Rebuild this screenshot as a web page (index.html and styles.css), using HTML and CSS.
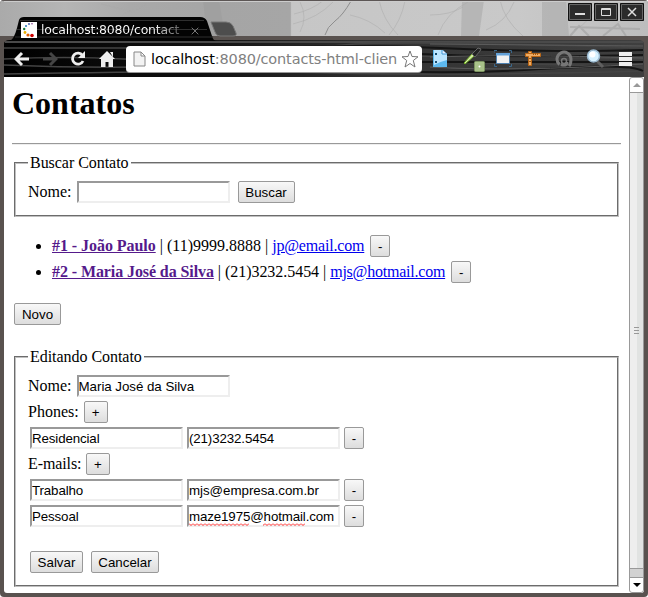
FILE: index.html
```html
<!DOCTYPE html>
<html lang="pt-BR">
<head>
<meta charset="utf-8">
<title>Contatos</title>
<link rel="stylesheet" href="styles.css">
</head>
<body>
<div class="window">
  <header class="chrome">
    <svg class="backdrop" width="648" height="77" viewBox="0 0 648 77" aria-hidden="true">
      <defs>
        <linearGradient id="sky"><stop offset="0" stop-color="#aaa"/><stop offset=".1" stop-color="#b5b5b5"/><stop offset=".2" stop-color="#a9a9a9"/><stop offset=".34" stop-color="#a5a5a5"/><stop offset=".448" stop-color="#a6a6a6"/><stop offset=".45" stop-color="#c6c6c6"/><stop offset=".8" stop-color="#c9c9c9"/><stop offset="1" stop-color="#bdbdbd"/></linearGradient>
        <linearGradient id="wood"><stop offset="0" stop-color="#000"/><stop offset=".3" stop-color="#111"/><stop offset=".6" stop-color="#333"/><stop offset="1" stop-color="#3f3f3f"/></linearGradient>
      </defs>
      <rect width="648" height="37" fill="url(#sky)"/>
      <path d="M462 0h22l-5 36h-18zM542 0h24l3 36h-27z" fill="#aaa" opacity=".6"/>
      <path d="M203 0h16l6 36h-18z" fill="#999" opacity=".4"/>
      <path d="M122 15C133 8 140 12 149 0M101 4l36 9M294 14q18-4 30-14M293 24q25-6 40-22M300 32q8-15 0-30M350 15q20 4 35 18M379 0q4 20 19 35M405 1q-4 20-16 34M430 15q20 0 33-8M438 35q8-22 30-33M486 30q20-8 28-28M500 0q4 20 23 36M574 30q18-8 24-30" fill="none" stroke="#aaa" opacity=".5"/>
      <path d="M351 1q-8 14-16 20t-10 14" fill="none" stroke="#8e8e8e"/>
      <path d="M570 36l9-10 10 10M570 27l70 2M603 36l15-12 8 12" fill="none" stroke="#999" stroke-width="2" opacity=".5"/>
      <path d="M0 .5h648" stroke="#5c5655"/><path d="M4 1.500h640" stroke="#ccc"/>
      <rect y="36" width="648" height="41" fill="#59524f"/>
      <path d="M4 44q0-4 6-4h628q6 0 6 4v33H4z" fill="url(#wood)"/>
      <path d="M5 42h638" stroke="#4a4a4a" stroke-width="2"/>
      <path d="M4 48h210q80 2 130-3t299 3M4 59q60-3 120 0t180-1 339 1M4 65q120 5 230-1t409 3M4 74q210-4 330-1t310-2" fill="none" stroke="#444" stroke-width="1.500"/>
      <path d="M220 51q110-8 220-3t203 2M360 62h283M360 70q90 5 180-1t103 2M420 54q90 4 223 1" fill="none" stroke="#151515" stroke-width="2"/>
      <path d="M430 57q80-3 213 1M430 67q80 5 213-3M430 44l213 2" fill="none" stroke="#5c5c5c"/>
      <path d="M10 41q4-2 7-13l2-8q1-3 5-3h176q5 0 7 4l5 15q1 5 5 5z" fill="#030303"/>
      <path d="M20 20.500h184M17 29.500h190M15 37h198" stroke="#2f2f2f"/>
      <path d="M211 22h15q5 0 7 4l3 7q1 3-3 3h-13q-4 0-5-4z" fill="#4d4d4d" stroke="#777"/>
    </svg>
    <div class="titlebar">
      <div class="tab">
        <svg class="favicon" width="16" height="16" viewBox="0 0 16 16"><path fill="#fff" d="M0 0h16v16H0z"/><circle cx="11" cy="13.500" r="1.800" fill="#c00"/><circle cx="7" cy="13" r="1.600" fill="#e05b00"/><circle cx="4" cy="10.500" r="1.400" fill="#eab000"/><circle cx="3.200" cy="7" r="1.200" fill="#187a40"/><circle cx="5" cy="4" r="1" fill="#277dc0"/><circle cx="8" cy="2" r=".9" fill="#3d59a8"/><circle cx="11" cy="1.700" r=".8" fill="#86408f"/></svg>
        <span class="tab-title">localhost:8080/contact</span>
        <svg class="tab-close" width="8" height="8" viewBox="0 0 8 8"><path d="M.7.7l6.600 6.600M7.300.7L.7 7.300" stroke="#777"/></svg>
      </div>
      <div class="window-buttons">
        <svg width="24" height="18" viewBox="0 0 24 18"><path d="M.5.5h23v17H.5z" fill="#2b2b2b" stroke="#111"/><path d="M1.500 1.500h21v15h-21z" fill="none" stroke="#666"/><path d="M7 11h10" stroke="#ddd" stroke-width="2"/></svg>
        <svg width="24" height="18" viewBox="0 0 24 18"><path d="M.5.5h23v17H.5z" fill="#2b2b2b" stroke="#111"/><path d="M1.500 1.500h21v15h-21z" fill="none" stroke="#666"/><path d="M7.500 5.500h9v7h-9zM7 6.500h10" fill="none" stroke="#ddd"/></svg>
        <svg width="24" height="18" viewBox="0 0 24 18"><path d="M.5.5h23v17H.5z" fill="#2b2b2b" stroke="#111"/><path d="M1.500 1.500h21v15h-21z" fill="none" stroke="#666"/><path d="M8 5l8 8M16 5l-8 8" stroke="#ddd" stroke-width="1.500"/></svg>
      </div>
    </div>
    <div class="toolbar">
      <svg class="nav" width="16" height="16" viewBox="0 0 16 16"><path d="M15 8H3M8 2L2 8l6 6" fill="none" stroke="#eee" stroke-width="3"/></svg>
      <svg class="nav" width="16" height="16" viewBox="0 0 16 16"><path d="M1 8h12M8 2l6 6-6 6" fill="none" stroke="#454545" stroke-width="3"/></svg>
      <svg class="nav" width="16" height="16" viewBox="0 0 16 16"><path d="M12.500 4.500A5.500 5.500 0 1 0 13 10" fill="none" stroke="#eee" stroke-width="2.800"/><path d="M15 0v7H8z" fill="#eee"/></svg>
      <svg class="nav" width="16" height="16" viewBox="0 0 16 16"><path d="M8 0l8 8h-2v8H9.500v-5h-3v5H2V8H0zM11 1h3v5z" fill="#eee"/></svg>
      <div class="address">
        <svg width="13" height="16" viewBox="0 0 13 16"><path d="M1 1h7l4 4v10H1zM8 1v4h4" fill="#f3f3f3" stroke="#888"/></svg>
        <span class="url">localhost<span class="path">:8080/contacts-html-clien</span></span>
        <svg class="star" width="18" height="18" viewBox="0 0 18 18"><path d="M9 1l2 5.500 6 .3-4.700 3.700L14 17l-5-3.500L4 17l1.700-6.500L1 6.800l6-.3z" fill="#fff" stroke="#777"/></svg>
      </div>
      <div class="extensions">
        <svg class="note" width="18" height="20" viewBox="0 0 18 20"><path d="M2 1h10l4 4v13H2z" fill="#5db9ef"/><path d="M3 1h8v4h5v6q-8 2-13 5z" fill="#bce5ff"/><path d="M11 1v4h5" fill="#eef" stroke="#3c98d4"/><path d="M4 4h2v2H4zM4 12h2v2H4z" fill="#174d70"/></svg>
        <svg class="picker" width="24" height="26" viewBox="0 0 24 26"><path d="M1 17l8-9 2 2-9 8z" fill="#d8eeaa" stroke="#73ad28"/><path d="M9 8l6-6 3 1-1 2-5 6z" fill="#222" stroke="#666"/><rect x="11.500" y="15.500" width="10" height="10" rx="1" fill="#a9c28a" stroke="#7c9461"/><circle cx="16.500" cy="20.500" r="1" fill="#fff"/></svg>
        <svg class="frame" width="18" height="18" viewBox="0 0 18 18"><path d="M0 3V.5h3M15 .5h2.500V3M.5 14v2.500H3M15 16.500h2.500V14" fill="none" stroke="#3a678a"/><path d="M2.500 3.500h13v10h-13z" fill="#f2f2f2" stroke="#4e81b0"/><path d="M2 3h14v2.500H2z" fill="#64a2d9"/></svg>
        <svg class="ruler" width="18" height="18" viewBox="0 0 18 18"><path d="M1.500 3.500h15v3h-9v9h-3v-9h-3zM4.500 1.500h3v2h-3z" fill="#efad65" stroke="#bb6716"/><path d="M9.500 3v2M11.500 3v2M13.500 3v2M5 8.500h2M5 11.500h2" stroke="#9e5712"/></svg>
        <svg class="loop" width="20" height="18" viewBox="0 0 20 18"><path d="M5.500 14.500A7 7 0 1 1 17 9q0 5-2 7M7 14.500q6 2 6-2.500" fill="none" stroke="#777" stroke-width="3"/><circle cx="10" cy="11" r="2.500" fill="none" stroke="#777" stroke-width="1.500"/></svg>
        <svg class="lens" width="20" height="20" viewBox="0 0 20 20"><path d="M12 12l6 6" stroke="#606060" stroke-width="3"/><circle cx="8.500" cy="7" r="6" fill="#d8f2ff" stroke="#9cbad0" stroke-width="1.500"/><circle cx="7.500" cy="5.500" r="3" fill="#fff"/></svg>
        <svg class="menu" width="13" height="16" viewBox="0 0 13 16"><path d="M0 1h13v4H0zM0 6h13v4H0zM0 11h13v4H0z" fill="#eee"/></svg>
      </div>
    </div>
  </header>

  <div class="viewport">
    <main>
      <h1>Contatos</h1>
      <hr>
      <fieldset class="search">
        <legend>Buscar Contato</legend>
        <div class="row"><span class="label">Nome:</span> <input type="text" aria-label="Nome"> <button class="w57">Buscar</button></div>
      </fieldset>
      <ul>
        <li><a class="visited" href="#c1">#1 - João Paulo</a> | (11)9999.8888 | <a href="#m1">jp@email.com</a> <button class="w20">-</button></li>
        <li class="tight"><a class="visited" href="#c2">#2 - Maria José da Silva</a> | (21)3232.5454 | <a href="#m2">mjs@hotmail.com</a> <button class="w20">-</button></li>
      </ul>
      <div class="row"><button class="w47">Novo</button></div>
      <fieldset class="edit">
        <legend>Editando Contato</legend>
        <div class="row"><span class="label">Nome:</span> <input class="name" type="text" value="Maria José da Silva" aria-label="Nome"></div>
        <div class="row"><span class="label">Phones:</span> <button class="w24">+</button></div>
        <div class="row items"><input type="text" value="Residencial"><input type="text" value="(21)3232.5454"><button class="w20">-</button></div>
        <div class="row"><span class="label wide">E-mails:</span> <button class="w24">+</button></div>
        <div class="row items"><input type="text" value="Trabalho"><input class="name" type="text" value="mjs@empresa.com.br"><button class="w20">-</button></div>
        <div class="row items"><input type="text" value="Pessoal"><span class="checked"><input type="text" value="maze1975@hotmail.com"><svg class="spelling" width="149" height="3" viewBox="0 0 149 3"><defs><pattern id="wave" width="4" height="3" patternUnits="userSpaceOnUse"><path d="M0 .5l2 2 2-2" fill="none" stroke="#f22"/></pattern></defs><path d="M0 0h60v3H0zM74 0h42v3H74z" fill="url(#wave)"/></svg></span><button class="w20">-</button></div>
        <div class="row actions"><button class="w53">Salvar</button> <button class="w68">Cancelar</button></div>
      </fieldset>
    </main>
    <aside class="scrollbar">
      <span class="arrow"><svg width="8" height="5" viewBox="0 0 8 5"><path d="M4 0l4 4H0z" fill="#999"/></svg></span>
      <span class="thumb"><i></i><i></i><i></i></span>
      <span class="track"></span>
      <span class="arrow"><svg width="8" height="5" viewBox="0 0 8 5"><path d="M0 0h8L4 4z" fill="#000"/></svg></span>
    </aside>
  </div>
</div>
</body>
</html>
```
FILE: styles.css
```css
* { box-sizing: border-box; }
body { margin: 0; background: #fff; font: 16px/18px "Liberation Serif", serif; color: #000; }
.window { width: 648px; height: 597px; display: grid; grid-template-rows: 77px 1fr; background: #59524f; border-radius: 4px; overflow: hidden; }
.chrome { position: relative; isolation: isolate; display: grid; grid-template-rows: 37px 40px; }
.backdrop { position: absolute; inset: 0; z-index: -1; }
svg { display: block; flex: none; }

.titlebar { display: flex; justify-content: space-between; padding: 3px 4px 0 21px; }
.tab { display: flex; align-items: center; height: 16px; margin-top: 19px; color: #fff; font: 12.5px/16px "DejaVu Sans", sans-serif; }
.tab-title { width: 144px; margin-left: 4px; white-space: nowrap; letter-spacing: -0.22px; background: linear-gradient(90deg, #fff 78%, #555 97%); background-clip: text; color: transparent; }
.tab-close { margin: 2px 0 0 6px; }
.window-buttons { display: flex; gap: 2px; }

.toolbar { display: flex; align-items: center; padding: 3px 15px 0 14px; }
.nav { margin-right: 12px; }
.nav:nth-child(3) { margin-right: 13px; }
.nav:nth-child(4) { margin-right: 11px; }
.address { display: flex; align-items: center; width: 296px; height: 26px; padding: 0 3px 0 7px; border-radius: 4px; background: #fff; box-shadow: 0 1px #999; }
.url { width: 250px; margin-left: 5px; white-space: nowrap; font: 14.5px/24px "DejaVu Sans", sans-serif; letter-spacing: -0.15px; }
.path { color: #808080; }
.extensions { display: flex; align-items: center; padding-left: 9px; }
.picker { margin-left: 14px; }
.frame { margin-left: 7px; }
.ruler { margin-left: 12px; }
.loop { margin-left: 12px; }
.lens { margin-left: 11px; }
.menu { margin-left: 14px; }

.viewport { display: flex; margin: 0 4px 4px; background: #fff; border-radius: 0 0 3px 3px; overflow: hidden; }
main { flex: 1; padding: 8px 8px 0; }
h1 { margin: 0 0 21px; font-size: 32px; line-height: 37px; }
hr { height: 2px; margin: 0 0 9px; border: 0; border-top: 1px solid #999; border-bottom: 1px solid #eee; }
fieldset { margin: 0 2px; padding: 0 12px 10px; border: 2px groove #c0c0c0; }
legend { height: 18px; padding: 0 2px; letter-spacing: -0.04px; }
.search .row { margin-top: 7px; }
.row { height: 26px; white-space: nowrap; }
.label { margin-right: -1px; }
.label.wide { margin-right: -2px; letter-spacing: -0.1px; margin-right: -1.5px; }
input, button { height: 22px; margin: 2px; font: 13.333px/15px "Liberation Sans", sans-serif; color: #000; }
input { width: 153px; padding: 1px 0; border: 2px solid; border-color: #999 #eee #eee #999; background: #fff; letter-spacing: -0.13px; }
.name { letter-spacing: -0.04px; }
button { padding: 0; border: 1px solid #999; border-radius: 2px; background: linear-gradient(#f8f8f8, #ddd); }
.w20 { width: 20px; }
.w24 { width: 24px; }
.w47 { width: 47px; }
.w53 { width: 53px; }
.w57 { width: 57px; }
.w68 { width: 68px; }
ul { margin: 16px 0; padding-left: 40px; }
li { height: 26px; }
a { color: #0000ee; letter-spacing: -0.18px; }
.visited { color: #551a8b; font-weight: bold; letter-spacing: -0.05px; }
.tight { letter-spacing: -0.04px; }
.tight a { letter-spacing: -0.22px; }
.tight .visited { letter-spacing: -0.09px; }
.edit { margin-top: 21px; }
.edit legend + .row { margin-top: 7px; }
.items { display: flex; }
.checked { position: relative; display: flex; }
.spelling { position: absolute; left: 4px; bottom: 3px; }
.actions { margin-top: 20px; }

.scrollbar { display: flex; flex-direction: column; width: 15px; border: 1px solid #999; border-radius: 3px; background: #fff; }
.arrow { display: flex; align-items: center; justify-content: center; height: 14px; }
.thumb { flex: 1; display: flex; flex-direction: column; align-items: center; justify-content: center; gap: 2px; border: solid #999; border-width: 1px 0; background: linear-gradient(90deg, #eee 50%, #e1e3e2 50%); }
.thumb i { width: 5px; height: 1px; background: #999; }
.track { height: 9px; border-bottom: 1px solid #999; background: #d2d2d2; }
```
